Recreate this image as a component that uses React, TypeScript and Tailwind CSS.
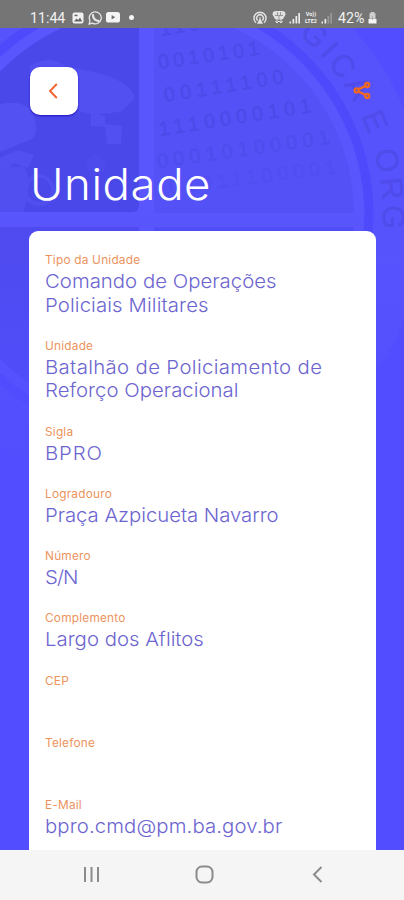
import React from 'react';

type Field = {
  label: string;
  lines: { text: string; tracking: string }[];
};

const fields: Field[] = [
  {
    label: 'Tipo da Unidade',
    lines: [
      { text: 'Comando de Operações', tracking: 'tracking-[0.02px]' },
      { text: 'Policiais Militares', tracking: 'tracking-[0.1px]' },
    ],
  },
  {
    label: 'Unidade',
    lines: [
      { text: 'Batalhão de Policiamento de', tracking: 'tracking-[0.33px]' },
      { text: 'Reforço Operacional', tracking: 'tracking-[0.02px]' },
    ],
  },
  { label: 'Sigla', lines: [{ text: 'BPRO', tracking: 'tracking-[0.8px]' }] },
  { label: 'Logradouro', lines: [{ text: 'Praça Azpicueta Navarro', tracking: 'tracking-[-0.05px]' }] },
  { label: 'Número', lines: [{ text: 'S/N', tracking: 'tracking-[-0.9px]' }] },
  { label: 'Complemento', lines: [{ text: 'Largo dos Aflitos', tracking: 'tracking-normal' }] },
  { label: 'CEP', lines: [] },
  { label: 'Telefone', lines: [] },
  { label: 'E-Mail', lines: [{ text: 'bpro.cmd@pm.ba.gov.br', tracking: 'tracking-[0.1px]' }] },
];

const StatusBar = () => (
  <header className="flex h-7 shrink-0 items-center justify-between bg-[#757575] pt-[7px] pr-[27px] pl-[30px] text-[#f1f1f1]">
    <div className="flex items-center">
      <span className="w-[36px] text-[14.2px] leading-4 whitespace-nowrap">11:44</span>
      <svg className="ml-[6px]" width="12" height="12" viewBox="0 0 12 12">
        <rect x="0.5" y="0.5" width="11" height="11" rx="2" fill="#f1f1f1" />
        <path d="M2 9.5 4.5 6.5 6.2 8 8 5.5 10.2 9.5Z" fill="#666" />
        <rect x="2.5" y="2.7" width="3" height="1.5" fill="#666" />
      </svg>
      <svg className="ml-[4px]" width="15" height="14" viewBox="0 0 15 14" fill="none" stroke="#e6e6e6">
        <path d="M1.2 13 2 9.7A6 6 0 1 1 4.4 12.1Z" strokeWidth="1.3" />
        <path d="M5 4.2c0 3.2 2.5 5.7 5.6 5.7" strokeWidth="2.2" strokeLinecap="round" />
      </svg>
      <svg className="ml-[3px]" width="14" height="11" viewBox="0 0 14 11">
        <rect width="14" height="10.5" rx="2.6" fill="#f4f4f4" />
        <path d="M5.6 3.1 9.2 5.3 5.6 7.5Z" fill="#707070" />
      </svg>
      <span className="ml-[9px] size-[5px] rounded-full bg-[#f4f4f4]" />
    </div>
    <div className="flex items-center">
      <svg width="14" height="13" viewBox="0 0 14 13" fill="none" stroke="#e2e2e2" strokeWidth="1.5">
        <path d="M3 11.7A6 6 0 1 1 11 11.7M4.6 9.4A3.3 3.3 0 1 1 9.4 9.4" />
        <path d="M7 6.3v1M5.2 12 7 8.5 8.8 12Z" fill="#e2e2e2" />
      </svg>
      <svg className="ml-[5px]" width="14" height="15" viewBox="0 0 14 15" fill="none" stroke="#e6e6e6">
        <path d="M1 4.5Q0.5 1.5 3.5 1.5H10.5Q13.5 1.5 13 4.5L10.5 9H3.5Z" fill="#dedede" />
        <path d="M3 5.5h8M5.5 2v3M8.5 2v3M7 6v3" stroke="#969696" strokeWidth="1" />
        <path d="M5 9.5v3M9 9.5v3M3.5 11 5 13 7 11 9 13 10.5 11" />
      </svg>
      <svg className="ml-[3px]" width="12" height="12" viewBox="0 0 12 12" fill="#ececec">
        <path d="M0.5 9.5h1.5v2H0.5ZM3.5 7h1.7v4.5H3.5ZM6.5 4h1.7v7.5H6.5ZM9.3 1h1.7v10.5H9.3Z" />
      </svg>
      <span className="ml-[2px] flex w-[16px] flex-col text-center text-[5.5px] leading-[7px] font-bold">
        <span>Vo))</span>
        <span>LTE2</span>
      </span>
      <svg className="ml-[2px]" width="12" height="12" viewBox="0 0 12 12" fill="#ececec">
        <path d="M0.5 9.5h1.5v2H0.5ZM3.5 7h1.7v4.5H3.5Z" />
        <path d="M6.5 4h1.7v7.5H6.5ZM9.3 1h1.7v10.5H9.3Z" fill="#999" />
      </svg>
      <span className="ml-[5px] w-[28px] text-[14.2px] leading-4 whitespace-nowrap">42%</span>
      <svg className="ml-[2px]" width="9" height="13" viewBox="0 0 9 13">
        <path d="M2.8 1h3.4v1.2H7.5v5.5H1.5V2.2h1.3Z" fill="#cfcfcf" />
        <path d="M0.5 8h8v4.5h-8Z" fill="#f4f4f4" />
        <path d="M4.5 5v4" stroke="#aaa" strokeWidth="1" />
      </svg>
    </div>
  </header>
);

// Faded agency seal behind the header
const Seal = () => (
  <svg className="absolute inset-0" width="404" height="822" viewBox="0 28 404 822" fill="none">
    <defs>
      <clipPath id="disc">
        <circle cx="148" cy="215" r="206" />
      </clipPath>
      <path id="rim" d="M148 -20A235 235 0 0 1 148 450" />
      <linearGradient id="fade" x1="0" y1="28" x2="0" y2="480" gradientUnits="userSpaceOnUse">
        <stop offset="0.4" stopColor="#524eff" stopOpacity="0" />
        <stop offset="1" stopColor="#524eff" />
      </linearGradient>
    </defs>
    <circle cx="148" cy="215" r="277" fill="#5753fc" />
    <circle cx="148" cy="215" r="216" fill="#5a56fe" />
    <circle cx="148" cy="215" r="221" stroke="#4e4afb" strokeWidth="9" />
    <g clipPath="url(#disc)">
      <rect x="-70" y="0" width="209" height="212" rx="6" fill="#4b48e9" />
      <rect x="154" y="0" width="210" height="213" fill="#5451f6" />
      <rect x="-70" y="227" width="209" height="220" fill="#4e4aee" />
      <rect x="154" y="227" width="210" height="220" fill="#514df5" />
      <path d="M30 66Q50 54 65 66L98 73Q131 82 135 98L122 111Q97 117 79 111L55 99 30 95Z" fill="#5350f2" />
      <path d="M0 104Q30 98 35 120 38 134 32 139L0 152Z" fill="#5451f3" />
      <path d="M0 158 18 150 34 155 28 168 14 163 0 176Z" fill="#5350f2" />
      <path d="M91 112 105 116 105 124 122 126 121 144 107 144 105 127 91 126Z" fill="#5350f2" />
      <path d="M0 168 24 166 30 182 24 212H0Z" fill="#524ff1" />
      <circle cx="39" cy="190" r="14" stroke="#524ff0" strokeWidth="4" />
      <path d="M86 160 96 154 106 162 104 172 88 170Z" fill="#4e4bec" />
    </g>
    <g
      fill="#4744dc"
      fillOpacity="0.42"
      stroke="#4744dc"
      strokeOpacity="0.25"
      strokeWidth="1"
      fontFamily="Liberation Sans"
      fontSize="20"
    >
      <text transform="translate(161 36) rotate(-9)" textLength="40">110</text>
      <text transform="translate(159 69) rotate(-8)" textLength="102">0010101</text>
      <text transform="translate(165 102) rotate(-9)" textLength="121">00111100</text>
      <text transform="translate(160 136) rotate(-9)" textLength="154">1110000101</text>
      <text opacity="0.6" transform="translate(158 168) rotate(-8)" textLength="174">00010100001</text>
      <text opacity="0.3" transform="translate(170 194) rotate(-7)" textLength="168">01011100001</text>
    </g>
    <text
      fill="#4542d2"
      fillOpacity="0.4"
      stroke="#4542d2"
      strokeOpacity="0.15"
      fontFamily="Liberation Sans"
      fontSize="31"
    >
      <textPath href="#rim" startOffset="163" textLength="220">GICA E ORG</textPath>
    </text>
    <rect y="28" width="404" height="822" fill="url(#fade)" />
  </svg>
);

const BackButton = () => (
  <button
    aria-label="Voltar"
    className="flex size-[48px] items-center justify-center rounded-[10px] bg-white pr-[2px] shadow-[0_1px_2px_#2412bd]"
  >
    <svg width="10" height="16" viewBox="0 0 10 16" fill="none" stroke="#f26430" strokeWidth="1.9">
      <path d="M8.8 1 2 8l6.8 7" />
    </svg>
  </button>
);

const ShareIcon = () => (
  <svg width="18" height="19" viewBox="0 0 18 19" fill="none" stroke="#f2691f" strokeWidth="2.3">
    <circle cx="3.7" cy="9.4" r="2" />
    <circle cx="14.2" cy="4" r="2" />
    <circle cx="14.2" cy="15" r="2" />
    <path d="M5.5 8.4 12.5 4.9M5.5 10.4 12.5 14" />
  </svg>
);

const UnitCard = () => (
  <section className="mr-[28px] ml-[29px] mt-[19px] flex flex-1 flex-col gap-[23.75px] rounded-t-[9px] bg-white pt-[22.5px] pl-[16px]">
    {fields.map((field) => (
      <div key={field.label}>
        <div className="h-[15px] origin-left scale-x-[1.04] text-[11.4px] leading-[15px] tracking-[0.2px] text-[#ec935d]">
          {field.label}
        </div>
        <div className="-mb-[2px] min-h-[23.5px] pt-[2px]">
          {field.lines.map((line) => (
            <div
              key={line.text}
              className={`h-[23.5px] origin-left scale-x-[1.06] text-[19.2px] leading-[23.5px] font-light whitespace-nowrap text-[#6d65cf] ${line.tracking}`}
            >
              {line.text}
            </div>
          ))}
          {field.lines.length === 0 && <div className="h-[23.5px]" />}
        </div>
      </div>
    ))}
  </section>
);

const NavigationBar = () => (
  <nav className="flex h-[50px] shrink-0 items-center bg-[#f5f5f5] pb-[2px] pl-[83px]">
    <svg width="17" height="17" viewBox="0 0 17 17" stroke="#8b8b8b" strokeWidth="2">
      <path d="M2 1v15M8.5 1v15M15 1v15" />
    </svg>
    <svg className="ml-[95px]" width="19" height="19" viewBox="0 0 19 19" fill="none" stroke="#8b8b8b" strokeWidth="2">
      <rect x="1.5" y="1.5" width="16" height="16" rx="5.5" />
    </svg>
    <svg className="ml-[98px]" width="11" height="17" viewBox="0 0 11 17" fill="none" stroke="#8b8b8b" strokeWidth="2">
      <path d="M9.5 1 2 8.5 9.5 16" />
    </svg>
  </nav>
);

const App = () => (
  <div className="flex h-[900px] w-[404px] flex-col overflow-hidden font-['Inter','Open_Sans',sans-serif]">
    <div className="font-['Roboto',sans-serif]">
      <StatusBar />
    </div>
    <main className="relative flex min-h-0 flex-1 flex-col overflow-hidden bg-[#524eff]">
      <Seal />
      <div className="relative flex min-h-0 flex-1 flex-col">
        <div className="flex items-center justify-between pt-[38.5px] pr-[33px] pl-[29.5px]">
          <BackButton />
          <ShareIcon />
        </div>
        <h1 className="mt-[42px] ml-[30px] origin-left scale-x-[1.06] text-[43px] leading-[55px] font-light tracking-[0.5px] text-white">
          Unidade
        </h1>
        <UnitCard />
      </div>
    </main>
    <NavigationBar />
  </div>
);

export default App;
